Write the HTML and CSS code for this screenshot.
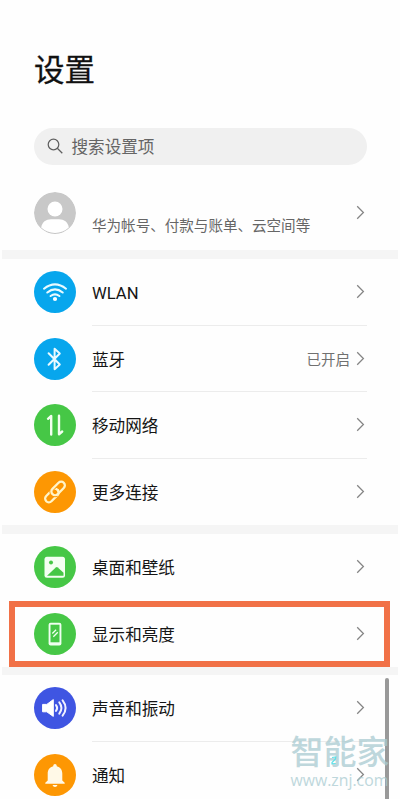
FILE: index.html
```html
<!DOCTYPE html>
<html lang="zh-CN">
<head>
<meta charset="utf-8">
<title>设置</title>
<link rel="stylesheet" href="styles.css">
</head>
<body>
<svg class="defs" width="0" height="0"><symbol id="chevron" viewBox="0 0 9 15"><path d="M1.2 1.3 7.4 7.5 1.2 13.7" fill="none" stroke="#858585" stroke-width="1.25"/></symbol></svg>
<main class="screen">
  <header class="header">
    <h1 class="title">设置</h1>
    <div class="search">
      <svg class="search-icon" viewBox="0 0 16 16"><circle cx="6.5" cy="6.5" r="5.3"/><path d="m10.3 10.3 5 5"/></svg>
      <span>搜索设置项</span>
    </div>
  </header>
  <section class="account">
    <svg class="icon" viewBox="0 0 42 42"><circle cx="21" cy="21" r="21" fill="#c8c8c8"/><circle cx="21" cy="17" r="7.5" fill="#fff"/><path d="M7.2 35.5C8 30 12 27.2 17 27.2h8c5 0 9 2.8 9.8 8.3A20 20 0 0 1 7.2 35.5Z" fill="#fff"/></svg>
    <span class="subtitle">华为帐号、付款与账单、云空间等</span>
    <svg class="chevron"><use href="#chevron"/></svg>
  </section>
  <section class="group">
    <div class="row">
      <svg class="icon blue" viewBox="0 0 42 42"><g fill="none" stroke="#e9faff" stroke-width="2.1" stroke-linecap="round"><path d="M10 17.7Q21 8.9 32 17.7"/><path d="M13.3 21.5Q21 15.3 28.7 21.5"/><path d="M16.6 25Q21 21.7 25.4 25"/></g><circle cx="21" cy="28" r="2.1" fill="#fff"/></svg>
      <div class="cell"><span class="label">WLAN</span><svg class="chevron"><use href="#chevron"/></svg></div>
    </div>
    <div class="row">
      <svg class="icon blue" viewBox="0 0 42 42"><path d="m14.6 15.2 11.2 11.3-5.2 4.7V10.8l5.2 4.7-11.2 11.3" fill="none" stroke="#e9faff" stroke-width="2" stroke-linejoin="round" stroke-linecap="round"/></svg>
      <div class="cell"><span class="label">蓝牙</span><span class="state">已开启</span><svg class="chevron"><use href="#chevron"/></svg></div>
    </div>
    <div class="row">
      <svg class="icon green" viewBox="0 0 42 42"><path d="M14 14.8 17.2 12v18.5M25 11.7v18.6l3.2-2.8" fill="none" stroke="#f2fff0" stroke-width="2.4" stroke-linejoin="round" stroke-linecap="round"/></svg>
      <div class="cell"><span class="label">移动网络</span><svg class="chevron"><use href="#chevron"/></svg></div>
    </div>
    <div class="row">
      <svg class="icon orange" viewBox="0 0 42 42"><g transform="rotate(-45 21 21)" fill="none" stroke="#fff4c8" stroke-width="2.3"><rect x="8.3" y="17.6" width="16" height="7.4" rx="3.7"/><path d="M17.7 20.8a3.7 3.7 0 0 1 3.7-3.8H30a3.7 3.7 0 0 1 0 7.4h-8.6a3.7 3.7 0 0 1-3.7-3.6Z" stroke="#fd9703" stroke-width="4"/><path d="M17.7 20.8a3.7 3.7 0 0 1 3.7-3.8H30a3.7 3.7 0 0 1 0 7.4h-8.6a3.7 3.7 0 0 1-3.7-3.6Z"/><path d="M20 25h.6a3.7 3.7 0 0 0 3.7-3.7"/></g></svg>
      <div class="cell"><span class="label">更多连接</span><svg class="chevron"><use href="#chevron"/></svg></div>
    </div>
  </section>
  <section class="group">
    <div class="row last">
      <svg class="icon green" viewBox="0 0 42 42"><rect x="10.5" y="10.7" width="20.5" height="21" rx="2.5" fill="#f4fff2"/><circle cx="17" cy="16.5" r="2" fill="#46c746"/><path d="m13 29.7 8.8-8.2q1-.9 2 0l5.7 5.3v2.9Z" fill="#46c746"/></svg>
      <div class="cell"><span class="label">桌面和壁纸</span><svg class="chevron"><use href="#chevron"/></svg></div>
    </div>
    <div class="row last">
      <svg class="icon green" viewBox="0 0 42 42"><rect x="14.6" y="9.8" width="12.8" height="22.6" rx="2" fill="#effff0"/><rect x="16.5" y="11.7" width="9" height="17.6" fill="#46c746"/><path d="m18.3 20.5 3.8-3.8M19.3 23.8l4.5-4.5" stroke="#effff0" stroke-width="1.3"/></svg>
      <div class="cell"><span class="label">显示和亮度</span><svg class="chevron"><use href="#chevron"/></svg></div>
    </div>
    <div class="highlight"></div>
  </section>
  <section class="group">
    <div class="row">
      <svg class="icon indigo" viewBox="0 0 42 42"><path d="M8.6 17.4h4.2l6.5-4.8v16.8l-6.5-4.6H8.6Z" fill="#fff" stroke="#fff" stroke-linejoin="round"/><g fill="none" stroke="#f1f2ff" stroke-width="2" stroke-linecap="round"><path d="M22 18.1q2.3 2.9 0 5.8M25.3 15.4q4.3 5.6 0 11.2M28.6 13.3q6 7.7 0 15.4"/></g></svg>
      <div class="cell"><span class="label">声音和振动</span><svg class="chevron"><use href="#chevron"/></svg></div>
    </div>
    <div class="row">
      <svg class="icon orange" viewBox="0 0 42 42"><path d="M11.3 29.8v-1.1l2.4-2.3v-6.7c0-4 2.1-6.6 5.5-7.5.1-1.4.8-2.2 1.8-2.2s1.7.8 1.8 2.2c3.4.9 5.5 3.5 5.5 7.5v6.7l2.4 2.3v1.1Z" fill="#fff9e7"/><path d="M18.5 31h5q-.7 2-2.5 2t-2.5-2Z" fill="#fff9e7"/></svg>
      <div class="cell"><span class="label">通知</span><svg class="chevron"><use href="#chevron"/></svg></div>
    </div>
  </section>
  <div class="scrollbar"></div>
  <div class="watermark"><div class="brand">智能家</div><div class="url">www.znj.com</div><svg class="mark" viewBox="0 0 6 9"><path d="M1 1.5 4.8 1 4.5 3 1 6.5v1.3l3.8-.3"/></svg></div>
</main>
</body>
</html>
```

FILE: styles.css
```css
* { box-sizing: border-box; }
body { margin: 0; background: #fefefe; font-family: Roboto, "Noto Sans CJK SC", sans-serif; }
.defs { display: block; position: absolute; }
.screen { position: relative; width: 400px; height: 799px; overflow: hidden; padding: 0 2px; background: #fefefe; color: #151515; }
.header { padding: 48px 31px 0 32px; }
.title { margin: 0; height: 45px; line-height: 45px; font-size: 30.5px; font-weight: 400; color: #111; -webkit-text-stroke: .3px #111; }
.search { display: flex; align-items: center; height: 37px; margin-top: 34.5px; padding-left: 13px; border-radius: 19px; background: #f0f0f0; color: #656565; font-size: 16.6px; gap: 8.5px; }
.search-icon { width: 16px; height: 16px; fill: none; stroke: #606060; stroke-width: 1.25; }
.account { display: flex; align-items: center; height: 85.5px; padding: 11px 31px 0 31.5px; }
.icon { display: block; flex: none; width: 42px; height: 42px; border-radius: 50%; margin-right: 16.5px; }
.subtitle { flex: 1; font-size: 14.55px; line-height: 20px; color: #666; white-space: nowrap; margin-top: 28px; }
.chevron { display: block; flex: none; width: 9px; height: 15px; margin-right: 2px; }
.blue { background: #07a6ed; }
.green { background: #46c746; }
.orange { background: #fd9703; }
.indigo { background: #3f55e2; }
.group { position: relative; border-top: 9px solid #f5f5f5; }
.group:last-of-type { border-top-width: 8px; }
.row { display: flex; align-items: center; height: 66.5px; padding: 0 31px 0 31.5px; }
.cell { display: flex; align-items: center; flex: 1; height: 66.5px; border-bottom: 1px solid #ececec; }
.row:last-of-type .cell, .last .cell { border-bottom-color: transparent; }
.label { flex: 1; font-size: 16.6px; line-height: 24px; padding-top: 5px; }
.state { font-size: 14.5px; color: #707070; margin-right: 6px; }
.highlight { position: absolute; left: 6.5px; top: 67px; width: 381.5px; height: 65.5px; border: 6px solid #f17147; }
.scrollbar { position: absolute; z-index: 1; left: 385px; top: 678px; width: 4px; height: 130px; border-radius: 2px; background: #999; }
.watermark { position: absolute; z-index: 2; left: 290.5px; top: 737px; color: #a9cbd1; opacity: .75; }
.brand { font-size: 33px; line-height: 31px; height: 33px; font-weight: 500; white-space: nowrap; }
.url { font-family: "Open Sans", sans-serif; font-size: 15.8px; line-height: 20px; }
.mark { position: absolute; left: 40px; top: 19px; width: 6px; height: 9px; fill: none; stroke: #28d6e0; stroke-width: 1.2; }
```
